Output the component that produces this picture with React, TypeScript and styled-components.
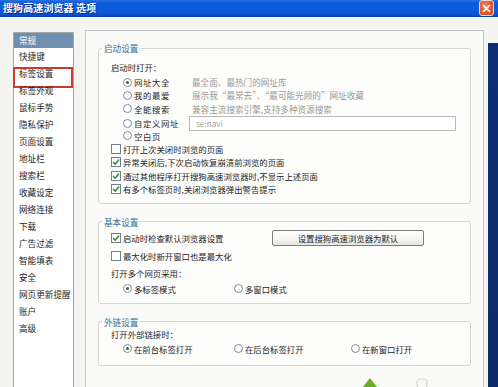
import React from "react";
import styled, { createGlobalStyle } from "styled-components";

const Global = createGlobalStyle`
  html, body { margin: 0; padding: 0; background: #f4f4f1; }
  * { box-sizing: border-box; }
`;

const FONT = `"Noto Sans CJK SC", "Noto Sans", "DejaVu Sans", sans-serif`;

const Window = styled.div`
  position: relative;
  width: 498px;
  height: 387px;
  overflow: hidden;
  display: flex;
  flex-direction: column;
  background: #f4f4f1;
  font-family: ${FONT};
  font-size: 8.4px;
  color: #1e1e1e;
`;

const TitleBar = styled.div`
  flex: none;
  height: 17px;
  display: flex;
  align-items: flex-start;
  justify-content: space-between;
  padding: 0 4px 0 3px;
  background: linear-gradient(180deg, #2a72e6 0%, #0b5ad8 18%, #0d5de0 55%, #0a52cc 85%, #0740ac 100%);
`;

const Title = styled.span`
  color: #fff;
  font-weight: bold;
  font-size: 10px;
  line-height: 16px;
  letter-spacing: 0.1px;
  text-shadow: 1px 1px 0 #0a2f86;
`;

const CloseBtn = styled.div`
  width: 15px;
  height: 16px;
  border-radius: 3px;
  border: 1px solid #f3d7c8;
  background: radial-gradient(circle at 40% 35%, #f08a62 0%, #dc5a30 55%, #c44a22 100%);
  display: flex;
  align-items: center;
  justify-content: center;
`;

const Body = styled.div`
  flex: 1;
  min-height: 0;
  display: flex;
`;

const Sidebar = styled.ul`
  flex: none;
  list-style: none;
  width: 61px;
  margin: 15px 0 -12px 13px;
  padding: 0;
  border: 1px solid #a9a9a6;
  background: #ffffff;
  font-size: 8.6px;
`;

const NavItem = styled.li<{ $selected?: boolean; $marked?: boolean }>`
  position: relative;
  height: ${(p) => (p.$selected ? 15 : 17)}px;
  line-height: ${(p) => (p.$selected ? 15 : 17)}px;
  padding-left: 5px;
  white-space: nowrap;
  color: ${(p) => (p.$selected ? "#ffffff" : "#1e1e1e")};
  background: ${(p) => (p.$selected ? "#6f8fb0" : "transparent")};
  ${(p) =>
    p.$marked
      ? `&::after {
          content: "";
          position: absolute;
          left: -1px;
          top: 2px;
          width: 56px;
          height: 17px;
          border: 2px solid #cc3b2c;
        }`
      : ""}
`;

const Panel = styled.div`
  flex: none;
  width: 399px;
  margin: 13px 0 -12px 11px;
  padding: 11px 12px 0 12px;
  border: 1px solid #c6c6c1;
  background: #fafaf8;
  display: flex;
  flex-direction: column;
`;

const RightEdge = styled.div`
  flex: none;
  width: 10px;
  margin-left: auto;
  background: linear-gradient(180deg, #f4f4f1 0, #f4f4f1 26px, #0d2f74 26px, #0a2a6a 100%);
`;

const Group = styled.fieldset<{ $gap?: number }>`
  margin: 0 0 ${(p) => p.$gap ?? 0}px 0;
  padding: 0;
  min-width: 0;
  border: 1px solid #d4d4ce;
  border-radius: 3px;
  background: #fdfdfc;
`;

const Legend = styled.legend`
  margin-left: 3px;
  padding: 0 2px;
  font-size: 8.6px;
  line-height: 12px;
  color: #3a6e92;
`;

const GroupBody = styled.div<{ $top: number; $bottom: number }>`
  padding: ${(p) => p.$top}px 14px ${(p) => p.$bottom}px 12px;
  display: flex;
  flex-direction: column;
`;

const Row = styled.div<{ $h: number; $indent?: number }>`
  height: ${(p) => p.$h}px;
  display: flex;
  align-items: center;
  padding-left: ${(p) => p.$indent ?? 0}px;
  white-space: nowrap;
`;

const RadioList = styled.div`
  margin-top: 2px;
  display: flex;
  flex-direction: column;
`;

const OptionGrid = styled.div`
  height: 13.4px;
  padding-left: 12px;
  display: grid;
  grid-template-columns: 66px 1fr;
  align-items: center;
  white-space: nowrap;
`;

const Desc = styled.span`
  padding-left: 3px;
  color: #9a9a96;
  font-size: 8.6px;
`;

const UrlInput = styled.div`
  height: 15px;
  width: 267px;
  border: 1px solid #b9b9b6;
  background: #ffffff;
  color: #a4a4a0;
  padding-left: 6px;
  line-height: 13px;
  font-size: 8.2px;
`;

const RadioLabel = styled.label<{ $spacing?: number }>`
  display: flex;
  align-items: center;
  gap: 2px;
  letter-spacing: ${(p) => p.$spacing ?? 0}px;
`;

const RadioDot = styled.span<{ $on?: boolean }>`
  flex: none;
  width: 9px;
  height: 9px;
  border-radius: 50%;
  border: 1px solid #7d8c9c;
  background: #ffffff;
  display: flex;
  align-items: center;
  justify-content: center;
  &::after {
    content: "";
    width: 3px;
    height: 3px;
    border-radius: 50%;
    background: ${(p) => (p.$on ? "#3d5e3d" : "transparent")};
  }
`;

const CheckLabel = styled.label`
  display: flex;
  align-items: center;
  gap: 2px;
`;

const CheckBox = styled.span`
  flex: none;
  width: 10px;
  height: 10px;
  border: 1px solid #6f7f93;
  background: #ffffff;
  display: flex;
  align-items: center;
  justify-content: center;
`;

const ButtonSlot = styled.div`
  width: 161px;
  flex: none;
`;

const XPButton = styled.button`
  width: 152px;
  height: 16px;
  padding: 0;
  border: 1px solid #7b7b78;
  border-radius: 2px;
  background: linear-gradient(180deg, #ffffff 0%, #f4f4f0 60%, #e4e3dd 100%);
  font-family: ${FONT};
  font-size: 8.4px;
  color: #1e1e1e;
  line-height: 14px;
`;

const ChoiceRow = styled.div<{ $h: number }>`
  height: ${(p) => p.$h}px;
  padding-left: 12px;
  display: grid;
  grid-template-columns: 111px 117px auto;
  align-items: center;
  white-space: nowrap;
`;

const Watermark = styled.svg`
  position: absolute;
  left: 360px;
  top: 375px;
`;

const Radio = ({ on, children, spacing }: { on?: boolean; children: React.ReactNode; spacing?: number }) => (
  <RadioLabel $spacing={spacing}>
    <RadioDot $on={on} />
    <span>{children}</span>
  </RadioLabel>
);

const Check = ({ on, children }: { on?: boolean; children: React.ReactNode }) => (
  <CheckLabel>
    <CheckBox>
      {on && (
        <svg width="8" height="8" viewBox="0 0 8 8">
          <path d="M1 4 L3.2 6.2 L7 1.6" fill="none" stroke="#2f8a2f" strokeWidth="1.5" />
        </svg>
      )}
    </CheckBox>
    <span>{children}</span>
  </CheckLabel>
);

const navItems = [
  "常规",
  "快捷键",
  "标签设置",
  "标签外观",
  "鼠标手势",
  "隐私保护",
  "页面设置",
  "地址栏",
  "搜索栏",
  "收藏设定",
  "网络连接",
  "下载",
  "广告过滤",
  "智能填表",
  "安全",
  "网页更新提醒",
  "账户",
  "高级",
];

export default function App() {
  return (
    <>
      <Global />
      <Window>
        <TitleBar>
          <Title>搜狗高速浏览器 选项</Title>
          <CloseBtn>
            <svg width="9" height="9" viewBox="0 0 9 9">
              <path d="M1.5 1.5 L7.5 7.5 M7.5 1.5 L1.5 7.5" stroke="#fff" strokeWidth="1.6" strokeLinecap="round" />
            </svg>
          </CloseBtn>
        </TitleBar>
        <Body>
          <Sidebar>
            {navItems.map((n, i) => (
              <NavItem key={n} $selected={i === 0} $marked={i === 2}>
                {n}
              </NavItem>
            ))}
          </Sidebar>
          <Panel>
            <Group $gap={12}>
              <Legend>启动设置</Legend>
              <GroupBody $top={6} $bottom={7}>
                <Row $h={13.4}>启动时打开：</Row>
                <RadioList>
                  <OptionGrid>
                    <Radio on spacing={0.6}>网址大全</Radio>
                    <Desc>最全面、最热门的网址库</Desc>
                  </OptionGrid>
                  <OptionGrid>
                    <Radio spacing={0.6}>我的最爱</Radio>
                    <Desc>展示我“最常去”、“最可能光顾的”网址收藏</Desc>
                  </OptionGrid>
                  <OptionGrid>
                    <Radio spacing={0.6}>全能搜索</Radio>
                    <Desc>兼容主流搜索引擎,支持多种资源搜索</Desc>
                  </OptionGrid>
                  <OptionGrid>
                    <Radio spacing={0.6}>自定义网址</Radio>
                    <UrlInput>se:navi</UrlInput>
                  </OptionGrid>
                  <OptionGrid>
                    <Radio spacing={0.6}>空白页</Radio>
                    <span />
                  </OptionGrid>
                </RadioList>
                <Row $h={13.4}>
                  <Check>打开上次关闭时浏览的页面</Check>
                </Row>
                <Row $h={13.4}>
                  <Check on>异常关闭后,下次启动恢复崩溃前浏览的页面</Check>
                </Row>
                <Row $h={13.4}>
                  <Check on>通过其他程序打开搜狗高速浏览器时,不显示上述页面</Check>
                </Row>
                <Row $h={13.4}>
                  <Check on>有多个标签页时,关闭浏览器弹出警告提示</Check>
                </Row>
              </GroupBody>
            </Group>

            <Group $gap={12}>
              <Legend>基本设置</Legend>
              <GroupBody $top={1} $bottom={7}>
                <Row $h={18}>
                  <ButtonSlot>
                    <Check on>启动时检查默认浏览器设置</Check>
                  </ButtonSlot>
                  <XPButton type="button">设置搜狗高速浏览器为默认</XPButton>
                </Row>
                <Row $h={18}>
                  <Check>最大化时新开窗口也是最大化</Check>
                </Row>
                <Row $h={17}>打开多个网页采用：</Row>
                <ChoiceRow $h={14}>
                  <Radio on>多标签模式</Radio>
                  <Radio>多窗口模式</Radio>
                </ChoiceRow>
              </GroupBody>
            </Group>

            <Group>
              <Legend>外链设置</Legend>
              <GroupBody $top={0} $bottom={8}>
                <Row $h={13}>打开外部链接时：</Row>
                <ChoiceRow $h={16}>
                  <Radio on>在前台标签打开</Radio>
                  <Radio>在后台标签打开</Radio>
                  <Radio>在新窗口打开</Radio>
                </ChoiceRow>
              </GroupBody>
            </Group>
          </Panel>
          <RightEdge />
        </Body>
        <Watermark width="70" height="12" viewBox="0 0 70 12">
          <path d="M10 3 L17 12 L3 12 Z" fill="#6aab2a" />
          <rect x="57" y="4" width="10" height="9" rx="3" fill="none" stroke="#d6d6d2" strokeWidth="1.2" />
        </Watermark>
      </Window>
    </>
  );
}
